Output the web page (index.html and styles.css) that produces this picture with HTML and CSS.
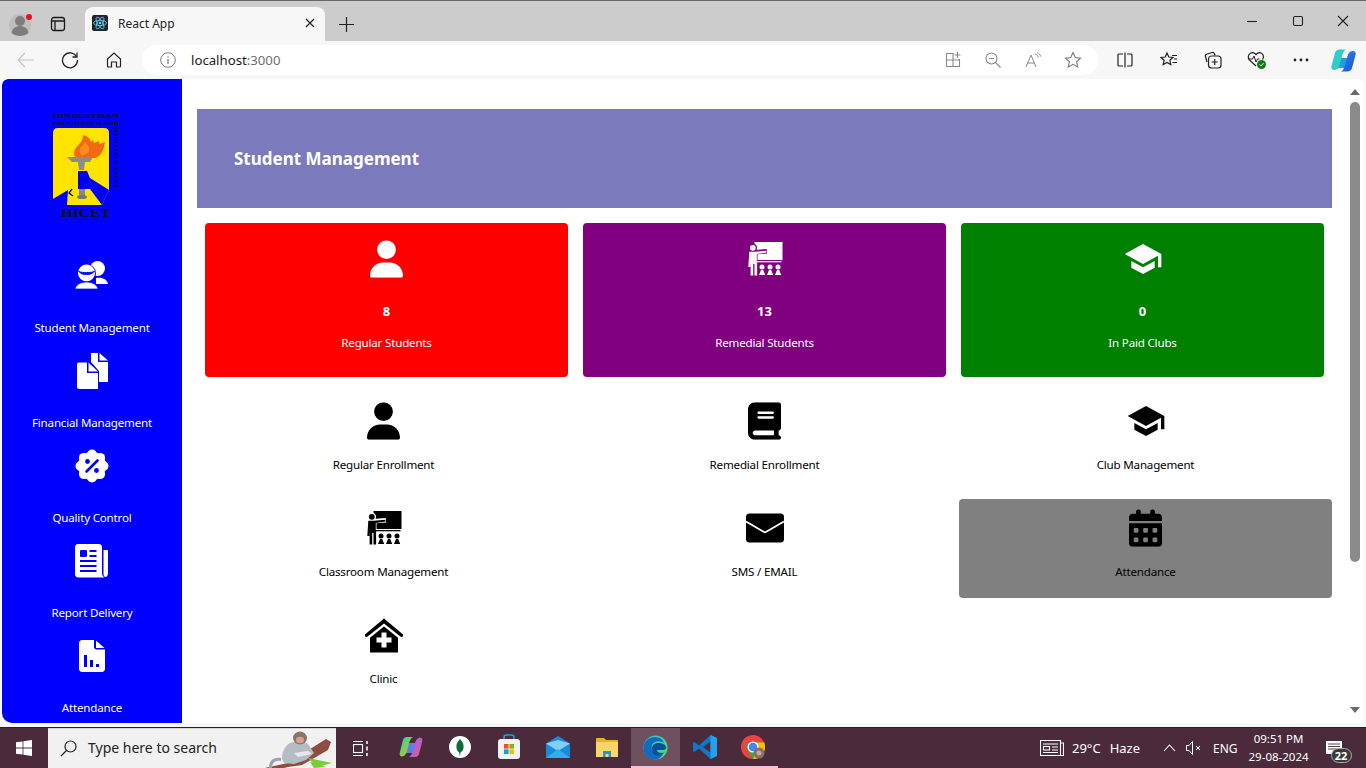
FILE: index.html
```html
<!DOCTYPE html>
<html lang="en">
<head>
<meta charset="utf-8">
<title>React App</title>
<link rel="stylesheet" href="styles.css">
</head>
<body>
<svg class="defs" width="0" height="0" aria-hidden="true">
  <defs>
    <symbol id="i-user" viewBox="0 0 448 512"><path d="M224 256A128 128 0 1 0 224 0a128 128 0 1 0 0 256zm-45.700 48C79.800 304 0 383.800 0 482.300C0 498.700 13.300 512 29.700 512H418.300c16.400 0 29.700-13.300 29.700-29.700C448 383.800 368.200 304 269.700 304H178.300z"/></symbol>
    <symbol id="i-book" viewBox="0 0 448 512"><path d="M96 0C43 0 0 43 0 96V416c0 53 43 96 96 96H384h32c17.700 0 32-14.300 32-32s-14.300-32-32-32V384c17.700 0 32-14.300 32-32V32c0-17.700-14.300-32-32-32H384 96zm0 384H352v64H96c-17.700 0-32-14.300-32-32s14.300-32 32-32zm32-240c0-8.800 7.200-16 16-16H336c8.800 0 16 7.200 16 16s-7.200 16-16 16H144c-8.800 0-16-7.200-16-16zm16 48H336c8.800 0 16 7.200 16 16s-7.200 16-16 16H144c-8.800 0-16-7.200-16-16s7.200-16 16-16z" fill-rule="evenodd"/></symbol>
    <symbol id="i-cap" viewBox="0 0 24 24"><path d="M5 13.180v4L12 21l7-3.820v-4L12 17l-7-3.820zM12 3 1 9l11 6 9-4.910V17h2V9L12 3z"/></symbol>
    <symbol id="i-cal" viewBox="0 0 448 512"><path fill-rule="evenodd" d="M128 0c17.700 0 32 14.300 32 32V64H288V32c0-17.700 14.300-32 32-32s32 14.300 32 32V64h48c26.500 0 48 21.500 48 48v48H0V112C0 85.500 21.500 64 48 64H96V32c0-17.700 14.300-32 32-32zM0 192H448V464c0 26.500-21.500 48-48 48H48c-26.500 0-48-21.500-48-48V192zm64 80v32c0 8.800 7.200 16 16 16h32c8.800 0 16-7.200 16-16V272c0-8.800-7.200-16-16-16H80c-8.800 0-16 7.200-16 16zm128 0v32c0 8.800 7.200 16 16 16h32c8.800 0 16-7.200 16-16V272c0-8.800-7.200-16-16-16H208c-8.800 0-16 7.200-16 16zm144-16c-8.800 0-16 7.200-16 16v32c0 8.800 7.200 16 16 16h32c8.800 0 16-7.200 16-16V272c0-8.800-7.200-16-16-16H336zM64 400v32c0 8.800 7.200 16 16 16h32c8.800 0 16-7.200 16-16V400c0-8.800-7.200-16-16-16H80c-8.800 0-16 7.200-16 16zm144-16c-8.800 0-16 7.200-16 16v32c0 8.800 7.200 16 16 16h32c8.800 0 16-7.200 16-16V400c0-8.800-7.200-16-16-16H208zm112 16v32c0 8.800 7.200 16 16 16h32c8.800 0 16-7.200 16-16V400c0-8.800-7.200-16-16-16H336c-8.800 0-16 7.200-16 16z"/></symbol>
    <symbol id="i-teach" viewBox="366 512 36 35">
      <rect x="373.500" y="512" width="28" height="18"/>
      <path class="cut" d="M370 522.500l16-1.300" stroke-width="4.600"/>
      <circle class="cut" cx="371.800" cy="517.800" r="4.300"/>
      <rect class="cut" x="366" y="520" width="10.500" height="12"/>
      <circle cx="371.800" cy="517.800" r="2.900"/>
      <path d="M368.300 521.700h5.500l11.700-1v1.900l-9.700 1.300v7.600h.3V545.500h-2.600v-11.500h-1.300v11.500h-2.600v-11h-.2v2.500h-2.100z"/>
      <rect x="375.500" y="531" width="25" height="1.300"/>
      <circle cx="381" cy="537" r="2.500"/><circle cx="389" cy="537" r="2.500"/><circle cx="397" cy="537" r="2.500"/>
      <path d="M378 545l2-5h2.200l2 5zM386 545l2-5h2.200l2 5zM394 545l2-5h2.200l2 5z"/>
    </symbol>
    <symbol id="i-clinic" viewBox="365 617 38 35">
      <path fill-rule="evenodd" d="M384 617.500l18.500 15.500c.8.800.8 1.800.2 2.500s-1.500.8-2.300.1L384 622.500l-16.400 13.100c-.8.700-1.700.6-2.300-.1s-.6-1.700.2-2.500zM384 625.500l14 11.300V651.500H370V636.800zM381.500 631.500v5h-5v5h5v5h5v-5h5v-5h-5v-5z"/>
    </symbol>
  </defs>
</svg>

<header class="tabstrip">
  <div class="profile">
    <svg width="24" height="24" viewBox="8 11 24 24"><circle cx="20" cy="24" r="11" fill="#bdbdbd"/><circle cx="20" cy="20" r="5" fill="#7d7d7d"/><path d="M11.500 32c1-5 4.500-7 8.500-7s7.500 2 8.500 7c-2.500 2-5.500 3-8.500 3s-6-1-8.500-3z" fill="#7d7d7d"/><circle cx="29" cy="16" r="3" fill="#e81123"/></svg>
  </div>
  <div class="tabaction">
    <svg width="16" height="16" viewBox="0 0 16 16" fill="none" stroke="#1a1a1a" stroke-width="1.300"><rect x="1.500" y="1.500" width="13" height="13" rx="2.500"/><path d="M1.500 5h13M5 5v9.500"/></svg>
  </div>
  <div class="tab">
    <svg class="favicon" width="16" height="16" viewBox="0 0 16 16"><rect width="16" height="16" rx="2" fill="#20232a"/><g fill="none" stroke="#61dafb" stroke-width=".8"><ellipse cx="8" cy="8" rx="6.500" ry="2.600"/><ellipse cx="8" cy="8" rx="6.500" ry="2.600" transform="rotate(60 8 8)"/><ellipse cx="8" cy="8" rx="6.500" ry="2.600" transform="rotate(120 8 8)"/></g><circle cx="8" cy="8" r="1.300" fill="#61dafb"/></svg>
    <span class="tabtitle">React App</span>
    <svg class="tabclose" width="10" height="10" viewBox="0 0 10 10" stroke="#222" stroke-width="1.200"><path d="M1 1l8 8M9 1l-8 8"/></svg>
  </div>
  <div class="newtab">
    <svg width="15" height="15" viewBox="0 0 15 15" stroke="#222" stroke-width="1.200"><path d="M7.500 0v15M0 7.500h15"/></svg>
  </div>
  <div class="winctl">
    <div class="winbtn"><svg width="12" height="12" viewBox="0 0 12 12" stroke="#222" stroke-width="1.100"><path d="M1 6.500h10"/></svg></div>
    <div class="winbtn"><svg width="12" height="12" viewBox="0 0 12 12" fill="none" stroke="#222" stroke-width="1.100"><rect x="1.500" y="1.500" width="9" height="9" rx="1.500"/></svg></div>
    <div class="winbtn"><svg width="12" height="12" viewBox="0 0 12 12" stroke="#222" stroke-width="1.100"><path d="M1 1l10 10M11 1L1 11"/></svg></div>
  </div>
</header>

<nav class="toolbar">
  <div class="tb"><svg width="18" height="18" viewBox="0 0 18 18" fill="none" stroke="#c4c4c4" stroke-width="1.200"><path d="M1 9h16M8 2L1 9l7 7"/></svg></div>
  <div class="tb"><svg width="18" height="18" viewBox="0 0 18 18" fill="none" stroke="#222" stroke-width="1.300"><path d="M15.500 5.500A7.500 7.500 0 1 0 16.500 9"/><path d="M16 1.500v4.500h-4.500"/></svg></div>
  <div class="tb"><svg width="16" height="16" viewBox="0 0 16 16" fill="none" stroke="#222" stroke-width="1.200"><path d="M1.500 7L8 1l6.500 6v7a1 1 0 0 1-1 1H10.500v-5h-5v5H2.500a1 1 0 0 1-1-1z"/></svg></div>
  <div class="address">
    <svg class="info" width="16" height="16" viewBox="0 0 16 16" fill="none" stroke="#777" stroke-width="1"><circle cx="8" cy="8" r="7.300"/><path d="M8 7v5M8 4.200v1.200" stroke-width="1.200"/></svg>
    <span class="url">localhost<span class="port">:3000</span></span>
    <div class="addr-icons">
      <div class="ai"><svg width="16" height="16" viewBox="0 0 16 16" fill="none" stroke="#888" stroke-width="1.100"><path d="M9 1.500H1.500v13h13V7M1.500 8h13M8 1.500v13M12.500 0v6M9.500 3h6"/></svg></div>
      <div class="ai"><svg width="16" height="16" viewBox="0 0 16 16" fill="none" stroke="#888" stroke-width="1.100"><circle cx="6.500" cy="6.500" r="5.500"/><path d="M10.500 10.500l5 5M4 6.500h5"/></svg></div>
      <div class="ai"><svg width="16" height="16" viewBox="0 0 16 16" fill="none" stroke="#888" stroke-width="1"><path d="M1 15L6 3l5 12M2.800 11h6.400M10 2c2 .5 3 1.700 3.200 3.500M12 .500c2 .8 3.300 2 3.500 4"/></svg></div>
      <div class="ai"><svg width="18" height="18" viewBox="0 0 18 18" fill="none" stroke="#777" stroke-width="1.100"><path d="M9 1.500l2.300 5 5.200.6-3.900 3.500 1.100 5.400L9 13.300 4.300 16l1.100-5.400L1.500 7.100l5.200-.6z"/></svg></div>
    </div>
  </div>
  <div class="tb-right">
    <div class="tb"><svg width="16" height="16" viewBox="0 0 16 16" fill="none" stroke="#222" stroke-width="1.200"><path d="M6 2H2a1 1 0 0 0-1 1v10a1 1 0 0 0 1 1h4M10 2h4a1 1 0 0 1 1 1v10a1 1 0 0 1-1 1h-4M8 .500v15"/></svg></div>
    <div class="tb"><svg width="18" height="18" viewBox="0 0 18 18" fill="none" stroke="#222" stroke-width="1.200"><path d="M7 2l1.800 4 4.200.5-3.100 2.800.9 4.200L7 11.400l-3.800 2.100.9-4.200L1 6.500l4.200-.5zM12 4.500h5M14 8h3M12.500 11.500H17"/></svg></div>
    <div class="tb"><svg width="18" height="18" viewBox="0 0 18 18" fill="none" stroke="#222" stroke-width="1.200"><path d="M3 11L1.500 5.500c-.3-1 .2-2 1.200-2.300L8 1.500c1-.3 2 .2 2.500 1.200l.6 1.800"/><rect x="4.500" y="5" width="12.500" height="12" rx="3"/><path d="M10.700 8v6M7.700 11h6"/></svg></div>
    <div class="tb"><svg width="20" height="20" viewBox="0 0 20 20"><path d="M9 16L2.500 10C.5 8 1 4.500 3.500 3.200 5.500 2.200 7.500 2.800 9 4.500c1.500-1.700 3.500-2.300 5.500-1.300C16.800 4.500 17 7.500 15.500 9.500" fill="none" stroke="#222" stroke-width="1.200"/><path d="M2 9h3.500l1.500-3 2 6 1.500-3h2" fill="none" stroke="#222" stroke-width="1"/><circle cx="14.500" cy="14.500" r="4.500" fill="#107c10"/><path d="M12.500 14.500l1.500 1.500 2.500-2.800" fill="none" stroke="#fff" stroke-width="1"/></svg></div>
    <div class="tb"><svg width="16" height="4" viewBox="0 0 16 4" fill="#222"><circle cx="2" cy="2" r="1.400"/><circle cx="8" cy="2" r="1.400"/><circle cx="14" cy="2" r="1.400"/></svg></div>
    <div class="tb tb-last"><svg width="25" height="25" viewBox="0 0 25 25"><defs><linearGradient id="cp1" x1="0" y1="0" x2="1" y2="1"><stop offset="0" stop-color="#28c6e6"/><stop offset="1" stop-color="#2fdc9c"/></linearGradient><linearGradient id="cp2" x1="0" y1="0" x2="1" y2="1"><stop offset="0" stop-color="#2a90ea"/><stop offset="1" stop-color="#1b4fc7"/></linearGradient></defs><path d="M5 10h16l-3 10H2z" fill="#1f9be8"/><path d="M8.500 1.500h7c-2.500.8-3.500 3-4.500 6.500L8.500 17c-.8 3-2.500 5-5.500 5-2 0-3.200-1.800-2.500-4L4 5c.6-2.200 2.500-3.500 4.500-3.500z" fill="url(#cp1)"/><path d="M16.500 23.500h-7c2.500-.8 3.500-3 4.500-6.500L16.500 8c.8-3 2.500-5 5.500-5 2 0 3.200 1.800 2.500 4L21 20c-.6 2.200-2.500 3.500-4.500 3.500z" fill="url(#cp2)"/></svg></div>
  </div>
</nav>

<div class="viewport">
  <div class="page">
    <aside class="sidebar">
      <svg class="logo" width="70" height="110" viewBox="52 110 70 110">
        <text x="86" y="118" class="logo-t1" textLength="66" lengthAdjust="spacingAndGlyphs">HINDUSTHAN</text>
        <text x="86" y="125" class="logo-t2" textLength="66" lengthAdjust="spacingAndGlyphs">EDUCATIONAL AND</text>
        <text transform="translate(115 122) rotate(90)" class="logo-t3" textLength="66" lengthAdjust="spacingAndGlyphs">CHARITABLE TRUST</text>
        <path d="M53 133q0-5 5-5h46q5 0 5 5v57l-7 15H67l1-15-15 9z" fill="#ffe400"/>
        <path d="M78 171h9l3 7 19 12-7 15-12-16H78z" fill="#0000ee"/>
        <path d="M74 154c0-7 6-9 8-14 1-2 1-4 1-5 4 1 7 3 8 7l2-2 1 3 5-2 0 3 6-2c-1 6-3 14-10 16H84c-6 1-10-1-10-4z" fill="#f06a10"/>
        <path d="M80 148c2-3 4-3 5-6 3 3 5 5 4 10l-7 4c-2-2-3-5-2-8z" fill="#fb8a20"/>
        <path d="M67 157h26l-3 5h-5l-1 8h-5l-1-8h-6z" fill="#8c8c8c"/>
        <rect x="79" y="189" width="6" height="8" fill="#888"/>
        <ellipse cx="82" cy="197" rx="5" ry="2" fill="#777"/>
        <path d="M72 189l-3 4 4 3" fill="none" stroke="#111" stroke-width="1.300"/>
        <text x="86" y="217" class="logo-t4" textLength="50" lengthAdjust="spacingAndGlyphs">HICET</text>
      </svg>

      <div class="navitem">
        <div class="navicon"><svg width="34" height="30" viewBox="75 262 34 30"><circle cx="97.500" cy="269.500" r="7.500" fill="#fff"/><path d="M96 279c6-1 11 1 12 6H96z" fill="#fff"/><circle cx="86.500" cy="274.500" r="9.500" fill="#00f" /><circle cx="86.500" cy="274" r="8.500" fill="#fff"/><path d="M78.500 272c2 3 5 3.500 8 3.500s6-.5 8-3.500c-1 .8-2 1.500-8 1.500s-7-.7-8-1.500z" fill="#00f" stroke="#00f"/><path d="M75 290c1-4 5-7 11.500-7s10.500 3 11.500 7z" fill="#fff" stroke="#00f" stroke-width=".7"/></svg></div>
        <div class="navlabel">Student Management</div>
      </div>
      <div class="navitem">
        <div class="navicon"><svg width="31" height="36" viewBox="76 353 31 36"><path d="M90 353h7v9h10v20H98v-11l-8-9z" fill="#fff"/><path d="M98.500 353l8.500 7.500h-8.500z" fill="#fff"/><path d="M78 362.500h8V373h11v16H78c-1.200 0-2-.8-2-2V364.500c0-1.200.8-2 2-2z" fill="#fff"/><path d="M87.500 362.500l9.500 9H87.500z" fill="#fff"/></svg></div>
        <div class="navlabel">Financial Management</div>
      </div>
      <div class="navitem">
        <div class="navicon"><svg width="34" height="34" viewBox="-17 -17 34 34"><g fill="#fff"><circle r="14"/><circle cx="0" cy="-11.500" r="5"/><circle cx="8.100" cy="-8.100" r="5"/><circle cx="11.500" cy="0" r="5"/><circle cx="8.100" cy="8.100" r="5"/><circle cx="0" cy="11.500" r="5"/><circle cx="-8.100" cy="8.100" r="5"/><circle cx="-11.500" cy="0" r="5"/><circle cx="-8.100" cy="-8.100" r="5"/></g><path d="M5.500-5.500l-11 11" stroke="#00f" stroke-width="2.600" stroke-linecap="round"/><circle cx="-4.500" cy="-4.500" r="2.400" fill="#00f"/><circle cx="4.500" cy="4.500" r="2.400" fill="#00f"/></svg></div>
        <div class="navlabel">Quality Control</div>
      </div>
      <div class="navitem">
        <div class="navicon"><svg width="34" height="34" viewBox="75 544 34 34"><path d="M78 544h21c1.600 0 3 1.400 3 3v26c0 2 1 3.500 2.500 4.500H78c-1.600 0-3-1.400-3-3V547c0-1.600 1.400-3 3-3z" fill="#fff"/><path d="M103.500 550H107c.6 0 1 .4 1 1v22c0 2-1 4-2.500 4-1.200 0-2-1.500-2-3z" fill="#fff"/><g fill="#00f"><rect x="80" y="550" width="7" height="7" rx="1"/><rect x="89.500" y="550" width="7" height="2"/><rect x="89.500" y="555" width="7" height="2"/><rect x="80" y="560" width="16.500" height="2"/><rect x="80" y="565" width="16.500" height="2"/><rect x="80" y="570" width="16.500" height="2"/></g></svg></div>
        <div class="navlabel">Report Delivery</div>
      </div>
      <div class="navitem">
        <div class="navicon"><svg width="26" height="32" viewBox="79 640 26 32"><path d="M82 640h12v7c0 1.500 1 2.500 2.500 2.500H105V669c0 1.600-1.400 3-3 3H82c-1.600 0-3-1.400-3-3v-26c0-1.600 1.400-3 3-3z" fill="#fff"/><path d="M96 640.500l8.500 7.500H96z" fill="#fff"/><g fill="#00f"><rect x="84" y="655" width="3" height="12"/><rect x="90" y="660" width="3" height="7"/><rect x="96" y="664" width="3" height="3"/></g></svg></div>
        <div class="navlabel">Attendance</div>
      </div>
    </aside>

    <main class="main">
      <div class="banner"><h1 class="banner-title">Student Management</h1></div>
      <section class="cards">
        <div class="card card-red">
          <div class="icon"><svg class="ic-user" viewBox="0 0 448 512"><use href="#i-user"/></svg></div>
          <div class="num">8</div>
          <div class="cardlabel">Regular Students</div>
        </div>
        <div class="card card-purple">
          <div class="icon"><svg class="ic-teach" viewBox="0 0 36 35"><use href="#i-teach" width="36" height="35"/></svg></div>
          <div class="num">13</div>
          <div class="cardlabel">Remedial Students</div>
        </div>
        <div class="card card-green">
          <div class="icon"><svg class="ic-cap" viewBox="0 0 24 24"><use href="#i-cap"/></svg></div>
          <div class="num">0</div>
          <div class="cardlabel">In Paid Clubs</div>
        </div>
      </section>
      <section class="tiles">
        <div class="tile">
          <div class="icon"><svg class="ic-user" viewBox="0 0 448 512"><use href="#i-user"/></svg></div>
          <div class="tilelabel">Regular Enrollment</div>
        </div>
        <div class="tile">
          <div class="icon"><svg class="ic-user" viewBox="0 0 448 512"><use href="#i-book"/></svg></div>
          <div class="tilelabel">Remedial Enrollment</div>
        </div>
        <div class="tile">
          <div class="icon"><svg class="ic-cap" viewBox="0 0 24 24"><use href="#i-cap"/></svg></div>
          <div class="tilelabel">Club Management</div>
        </div>
        <div class="tile">
          <div class="icon"><svg class="ic-teach" viewBox="0 0 36 35"><use href="#i-teach" width="36" height="35"/></svg></div>
          <div class="tilelabel">Classroom Management</div>
        </div>
        <div class="tile">
          <div class="icon"><svg class="ic-mail" viewBox="0 0 38 30"><rect width="38" height="29" y=".5" rx="3.500"/><path d="M0 8.500l19 11 19-11" fill="none" stroke="#fff" stroke-width="1.800"/></svg></div>
          <div class="tilelabel">SMS / EMAIL</div>
        </div>
        <div class="tile tile-active">
          <div class="icon"><svg class="ic-user" viewBox="0 0 448 512"><use href="#i-cal"/></svg></div>
          <div class="tilelabel">Attendance</div>
        </div>
        <div class="tile">
          <div class="icon"><svg class="ic-clinic" viewBox="0 0 38 35"><use href="#i-clinic" width="38" height="35"/></svg></div>
          <div class="tilelabel">Clinic</div>
        </div>
      </section>
    </main>

    <div class="scrollbar">
      <div class="arrow-up"></div>
      <div class="thumb"></div>
      <div class="arrow-down"></div>
    </div>
  </div>
</div>

<footer class="taskbar">
  <div class="start"><svg width="16" height="16" viewBox="0 0 16 16" fill="#fff"><path d="M0 2.300l6.600-.9v6.200H0zM7.400 1.300L16 0v7.600H7.400zM0 8.400h6.600v6.200L0 13.700zM7.400 8.400H16V16l-8.600-1.300z"/></svg></div>
  <div class="search">
    <svg class="search-ic" width="17" height="17" viewBox="0 0 17 17" fill="none" stroke="#222" stroke-width="1.200"><circle cx="10.500" cy="6.500" r="5.500"/><path d="M6.500 10.500L1 16"/></svg>
    <span class="search-t">Type here to search</span>
    <svg class="monkey" width="78" height="40" viewBox="260 728 78 40">
      <path d="M262 768l28-6 38-24 5 3-3 8-26 15-14 2-8 2z" fill="#8f4d3f"/>
      <path d="M310 757l24 5-15 4zM312 761l16 5-12 1z" fill="#7ccb3a"/>
      <path d="M283 757c-8-1-12 3-12 10h3c0-5 3-8 9-7z" fill="#9aa3ad"/>
      <path d="M292 742c-5 3-8 9-8 15l2 5 10 1 12-4 8-7-6-9-8-4z" fill="#b4bcc4"/>
      <path d="M296 752l14-2 4 3-14 3z" fill="#e6e9ec"/>
      <ellipse cx="302" cy="737" rx="7" ry="6.500" fill="#8a7468"/><ellipse cx="302" cy="739" rx="4" ry="3.300" fill="#d9a08f"/>
    </svg>
  </div>
  <div class="taskview"><svg width="16" height="15" viewBox="0 0 16 15" fill="none" stroke="#fff" stroke-width="1.100"><path d="M0 .5h10M0 14.500h10"/><rect x=".5" y="3.500" width="9" height="8"/><path d="M14 0v3M14 5.500v4M14 12v3" stroke-width="1.500"/></svg></div>
  <div class="apps">
    <div class="app"><svg width="24" height="24" viewBox="0 0 24 24"><defs><linearGradient id="tc1" x1="0" y1="0" x2="1" y2="1"><stop offset="0" stop-color="#2cc4d8"/><stop offset=".5" stop-color="#7fd04a"/><stop offset="1" stop-color="#f4b32c"/></linearGradient><linearGradient id="tc2" x1="0" y1="0" x2="1" y2="1"><stop offset="0" stop-color="#8a6be8"/><stop offset="1" stop-color="#e8589a"/></linearGradient></defs><path d="M5 8h15l-3 10H2z" fill="#5a7fe6"/><path d="M8 2h6c-2 1-3 3-4 6l-2 8c-.8 3-2.500 5.500-5 5.500-2 0-2.800-2-2.200-4L4 5c.5-2 2-3 4-3z" fill="url(#tc1)"/><path d="M16 22h-6c2-1 3-3 4-6l2-8c.8-3 2.500-5.500 5-5.500 2 0 2.800 2 2.200 4L20 19c-.5 2-2 3-4 3z" fill="url(#tc2)"/></svg></div>
    <div class="app"><svg width="24" height="24" viewBox="0 0 24 24"><circle cx="12" cy="12" r="11" fill="#fff"/><path d="M12 4c3 3 4 6 3.500 9-.3 2-1.700 3.500-3 4.500l-.3 3h-.6l-.3-3C10 16.500 8.700 15 8.500 13 8 10 9 7 12 4z" fill="#0e6b3a"/></svg></div>
    <div class="app"><svg width="24" height="26" viewBox="0 0 24 26"><path d="M7 6V3.500C7 2 8 1 9.500 1h5C16 1 17 2 17 3.500V6" fill="none" stroke="#1aa0e0" stroke-width="1.600"/><rect x="1" y="5" width="22" height="20" rx="3" fill="#f2f2f2"/><rect x="7" y="10" width="4.600" height="4.600" fill="#f25022"/><rect x="12.400" y="10" width="4.600" height="4.600" fill="#7fba00"/><rect x="7" y="15.400" width="4.600" height="4.600" fill="#00a4ef"/><rect x="12.400" y="15.400" width="4.600" height="4.600" fill="#ffb900"/></svg></div>
    <div class="app"><svg width="24" height="24" viewBox="0 0 24 24"><path d="M0 8.500L12 1l12 7.500V23H0z" fill="#1a8ad8"/><path d="M0 8.500L12 16l12-7.500L12 5z" fill="#7fd0f4"/><path d="M0 23l12-9 12 9z" fill="#2fb0ee"/></svg></div>
    <div class="app"><svg width="22" height="20" viewBox="0 0 22 20"><path d="M0 2c0-.6.400-1 1-1h7l2 2h11c.6 0 1 .4 1 1v15H0z" fill="#e8b02c"/><rect y="5" width="22" height="15" fill="#fcd768"/><path d="M7 20v-6h8v6h-2.500v-3h-3v3z" fill="#2a8fd8"/></svg></div>
    <div class="app app-active running"><svg width="25" height="25" viewBox="0 0 25 25"><defs><linearGradient id="ed1" x1="0" y1="0" x2="1" y2="1"><stop offset="0" stop-color="#33c6d8"/><stop offset="1" stop-color="#4fdc6a"/></linearGradient></defs><circle cx="12.500" cy="12.500" r="12" fill="url(#ed1)"/><path d="M.5 12.500C1 6 6 2 12 2c5 0 8 3 9 6-3-2.500-10-3-12 2-1 3 0 7 3 9 2 1.300 5 1.500 8 .5-2 3-5 5-8 5C5 24.500.5 19 .5 12.500z" fill="#0f6cc0"/><path d="M9 13c0-3 3-5 7-5 3 0 6 1 7 4 .3 2-1 3-3 3h-6c0 2 2 3 5 3l2.500-.5c-2.500 3-7 4-10 2-2-1.500-2.500-4-2.500-6.500z" fill="#0b4d96"/></svg></div>
    <div class="app running"><svg width="24" height="24" viewBox="0 0 24 24"><path d="M17.500 0L24 3v18l-6.500 3L6 13.500 1.500 17 0 16V8l1.500-1L6 10.500z" fill="#0e78c8"/><path d="M17.500 6.500L10 12l7.500 5.500z" fill="#4b2a3c"/><path d="M17.500 0L24 3v18l-6.500 3z" fill="#22a1ee"/></svg></div>
    <div class="app running"><svg width="25" height="25" viewBox="0 0 25 25"><circle cx="12" cy="12" r="12" fill="#e8453c"/><path d="M1.600 6L7 15.500 12 24c7 0 12-5.500 12-12 0-1.500-.2-3-.8-4.500H12c-2.500 0-4.500 1.500-5 4z" fill="#34a853"/><path d="M12 24c7 0 12-5.500 12-12 0-1.500-.2-3-.8-4.500H12l4.500 7.500z" fill="#fbbc05"/><circle cx="12" cy="12" r="5.500" fill="#fff"/><circle cx="12" cy="12" r="4.300" fill="#4285f4"/><circle cx="18" cy="18" r="5.500" fill="#8a6d68"/><circle cx="18" cy="18" r="2.500" fill="#c0a8a0"/></svg></div>
  </div>
  <div class="tray">
    <svg class="tray-news" width="24" height="16" viewBox="0 0 24 16" fill="none" stroke="#fff" stroke-width="1.100"><rect x=".5" y=".5" width="20" height="15"/><path d="M20.500 3h3v12.500h-3M3 4h15M3 12.500h15"/><rect x="3.500" y="6.500" width="6" height="3.500"/><path d="M12 7h6M12 10h6"/></svg>
    <span class="tray-temp">29°C</span>
    <span class="tray-haze">Haze</span>
    <svg class="tray-caret" width="13" height="8" viewBox="0 0 13 8" fill="none" stroke="#fff" stroke-width="1.100"><path d="M1 7l5.500-6L12 7"/></svg>
    <svg class="tray-vol" width="15" height="14" viewBox="0 0 15 14" fill="none" stroke="#fff" stroke-width="1"><path d="M.5 4.500h2.500L6.500.5v13L3 9.500H.5zM10 5l4 4M14 5l-4 4"/></svg>
    <span class="tray-eng">ENG</span>
    <div class="clock"><div>09:51 PM</div><div>29-08-2024</div></div>
    <div class="notif">
      <svg width="16" height="13" viewBox="0 0 16 13" fill="#fff"><path d="M0 0h16v13H0z"/><path d="M2 3h12M2 5.500h12M2 8h8" stroke="#4b2a3c" stroke-width=".9"/></svg>
      <span class="badge">22</span>
    </div>
  </div>
</footer>
</body>
</html>
```

FILE: styles.css
```css
* { box-sizing: border-box; }
html, body { margin: 0; padding: 0; }
body {
  width: 1366px;
  height: 768px;
  overflow: hidden;
  display: flex;
  flex-direction: column;
  font-family: "Noto Sans", "Open Sans", "Liberation Sans", sans-serif;
  font-size: 12px;
  background: #f7f7f7;
  color: #000;
}
.defs { position: absolute; }

/* tab strip */
.tabstrip {
  height: 41px;
  flex: none;
  display: flex;
  align-items: flex-end;
  background: #cccccc;
  border-top: 1px solid #666;
}
.profile { width: 40px; height: 34px; display: flex; align-items: center; justify-content: center; }
.tabaction { width: 36px; height: 34px; display: flex; align-items: center; justify-content: center; }
.tab {
  width: 240px;
  height: 34px;
  margin-left: 9px;
  background: #f7f7f7;
  border-radius: 8px 8px 0 0;
  display: flex;
  align-items: center;
  padding: 0 10px 2px 7px;
}
.tabtitle { margin-left: 10px; font-size: 12px; color: #222; flex: 1; }
.newtab { width: 42px; height: 34px; display: flex; align-items: center; justify-content: center; }
.winctl { margin-left: auto; display: flex; height: 40px; }
.winbtn { width: 45.500px; display: flex; align-items: center; justify-content: center; }

/* toolbar */
.toolbar {
  height: 38px;
  flex: none;
  display: flex;
  align-items: center;
  padding-left: 4px;
  background: #f7f7f7;
}
.tb { width: 44px; height: 30px; display: flex; align-items: center; justify-content: center; flex: none; }
.tb-last { margin-left: -2px; }
.address {
  width: 956px;
  height: 30px;
  margin-left: 6px;
  background: #fff;
  border-radius: 15px;
  display: flex;
  align-items: center;
  padding: 0 5px 0 18px;
}
.url { margin-left: 15px; font-size: 13.200px; color: #1a1a1a; }
.port { color: #6f6f6f; }
.addr-icons { margin-left: auto; display: flex; }
.ai { width: 40px; display: flex; align-items: center; justify-content: center; }
.tb-right { display: flex; margin-left: 5px; }

/* page */
.viewport {
  flex: 1;
  min-height: 0;
  padding: 0 2px 4px 2px;
  background: #f7f7f7;
}
.page {
  height: 100%;
  display: flex;
  background: #fff;
  border-radius: 6px;
  overflow: hidden;
}
.sidebar {
  width: 180px;
  flex: none;
  background: #0000ff;
  color: #fff;
  overflow: hidden;
  border-radius: 6px 0 0 10px;
  display: flex;
  flex-direction: column;
  align-items: center;
}
.logo { flex: none; margin: 31px 0 36px -10px; }
.logo-t1, .logo-t2, .logo-t3, .logo-t4 { font-family: "Liberation Serif", serif; fill: #111; text-anchor: middle; }
.logo-t1 { font-size: 7px; font-weight: 700; }
.logo-t2 { font-size: 4.500px; font-weight: 700; }
.logo-t3 { font-size: 5px; font-weight: 700; text-anchor: start; }
.logo-t4 { font-size: 13px; font-weight: 700; }
.navitem { flex: none; height: 95px; width: 100%; display: flex; flex-direction: column; align-items: center; }
.navicon { height: 40px; flex: none; display: flex; align-items: center; justify-content: center; }
.navlabel, .cardlabel, .tilelabel { font-size: 11.600px; letter-spacing: -.2px; line-height: 18px; white-space: nowrap; }
.navlabel { margin-top: 23px; }

.main {
  flex: 1;
  min-width: 0;
  padding: 30px 16px 0 15px;
}
.banner {
  height: 99px;
  background: #7b7abd;
  display: flex;
  align-items: center;
  padding-left: 37px;
}
.banner-title { margin: 0; font-size: 17px; font-weight: 700; color: #fff; }
.cards {
  margin-top: 15px;
  padding: 0 8px;
  display: grid;
  grid-template-columns: repeat(3, 1fr);
  gap: 15px;
}
.card {
  height: 154px;
  border-radius: 4px;
  color: #fff;
  padding-top: 16px;
  display: flex;
  flex-direction: column;
  align-items: center;
  --cut: #800080;
}
.card-red { background: #ff0000; }
.card-purple { background: #800080; }
.card-green { background: #008000; }
.icon { height: 40px; flex: none; display: flex; align-items: center; justify-content: center; fill: currentColor; }
.cut { fill: var(--cut); stroke: var(--cut); stroke-width: 0; }
path.cut { fill: none; stroke-width: 4.600px; }
.ic-user { height: 38px; width: 33px; fill: currentColor; }
.ic-teach { height: 35px; width: 36px; fill: currentColor; }
.ic-cap { height: 40px; width: 40px; fill: currentColor; }
.ic-mail { height: 30px; width: 38px; fill: currentColor; }
.ic-clinic { height: 35px; width: 38px; fill: currentColor; }
.num { margin-top: 22px; line-height: 20px; font-size: 13px; font-weight: 700; }
.cardlabel { margin-top: 13px; }
.tiles {
  margin-top: 15px;
  display: grid;
  grid-template-columns: repeat(3, 1fr);
  grid-auto-rows: 99px;
  gap: 8px;
}
.tile {
  padding-top: 9px;
  border-radius: 4px;
  display: flex;
  flex-direction: column;
  align-items: center;
  --cut: #fff;
}
.tile-active { background: #808080; }
.tilelabel { margin-top: 15px; }

.scrollbar {
  width: 14px;
  flex: none;
  display: flex;
  flex-direction: column;
  align-items: center;
  padding-top: 10px;
  margin-right: 2px;
}
.arrow-up { width: 0; height: 0; border-left: 5px solid transparent; border-right: 5px solid transparent; border-bottom: 6px solid #6a6a6a; }
.thumb { width: 10px; height: 460px; margin-top: 7px; background: #8b8b8b; border-radius: 5px; }
.arrow-down { width: 0; height: 0; margin-top: 145px; border-left: 5px solid transparent; border-right: 5px solid transparent; border-top: 6px solid #6a6a6a; }

/* taskbar */
.taskbar {
  height: 41px;
  flex: none;
  display: flex;
  background: #4b2a3c;
  border-top: 1px solid #222;
  color: #fff;
}
.start { width: 48px; display: flex; align-items: center; justify-content: center; }
.search {
  width: 288px;
  background: #f1f1f1;
  border-top: 1px solid #d5d5d5;
  display: flex;
  align-items: center;
  overflow: hidden;
  padding-left: 12px;
}
.search-ic { flex: none; }
.search-t { margin: 0 0 2px 11px; font-size: 14px; color: #222; white-space: nowrap; }
.monkey { margin-left: auto; flex: none; }
.taskview { width: 50px; display: flex; align-items: center; justify-content: center; }
.apps { display: flex; }
.app { width: 49px; display: flex; align-items: center; justify-content: center; border-bottom: 2px solid transparent; }
.running { border-bottom-color: #f6bfd6; }
.app-active { background: #6e505f; }
.tray { margin-left: auto; display: flex; align-items: center; width: 326px; font-size: 13px; white-space: nowrap; }
.tray-news { flex: none; }
.tray-temp { margin-left: 8px; }
.tray-haze { margin-left: 9px; }
.tray-caret { margin-left: 23px; flex: none; }
.tray-vol { margin-left: 10px; flex: none; }
.tray-eng { margin-left: 12px; font-size: 12px; }
.clock { margin-left: 1px; width: 80px; text-align: center; font-size: 11.500px; line-height: 18px; }
.notif { margin-left: 7px; width: 32px; height: 30px; padding-top: 7px; position: relative; }
.badge {
  position: absolute;
  left: 5px;
  top: 15px;
  width: 21px;
  height: 15px;
  border-radius: 8px;
  background: #3a3a3a;
  border: 1px solid #aaa;
  font-size: 11px;
  line-height: 13px;
  text-align: center;
  font-weight: 700;
}
```
